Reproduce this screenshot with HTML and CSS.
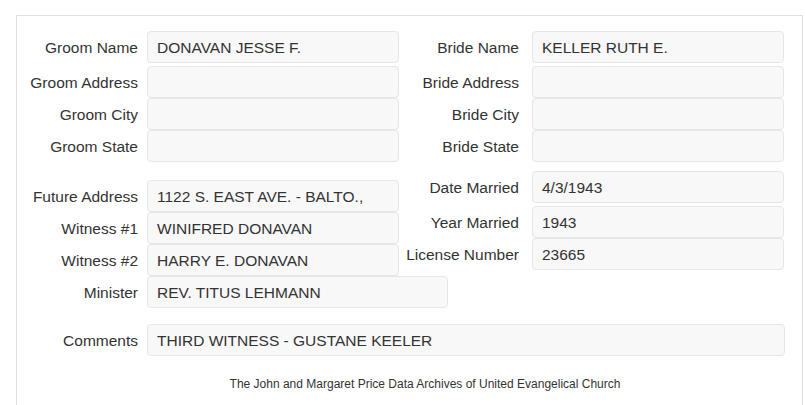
FILE: index.html
```html
<!DOCTYPE html>
<html lang="en">
<head>
    <meta charset="UTF-8">
    <meta name="viewport" content="width=device-width, initial-scale=1.0">
    <title>Marriage Record</title>
    <link rel="stylesheet" href="styles.css">
</head>
<body>
    <div class="panel">
        <div class="section">
            <div class="col col-left">
                <div class="row lead"><label>Groom Name</label><div class="field">DONAVAN JESSE F.</div></div>
                <div class="row"><label>Groom Address</label><div class="field"></div></div>
                <div class="row"><label>Groom City</label><div class="field"></div></div>
                <div class="row"><label>Groom State</label><div class="field"></div></div>
            </div>
            <div class="col col-right">
                <div class="row lead"><label>Bride Name</label><div class="field">KELLER RUTH E.</div></div>
                <div class="row"><label>Bride Address</label><div class="field"></div></div>
                <div class="row"><label>Bride City</label><div class="field"></div></div>
                <div class="row"><label>Bride State</label><div class="field"></div></div>
            </div>
        </div>

        <div class="section second">
            <div class="col col-left shifted">
                <div class="row"><label>Future Address</label><div class="field">1122 S. EAST AVE. - BALTO.,</div></div>
                <div class="row"><label>Witness #1</label><div class="field">WINIFRED DONAVAN</div></div>
                <div class="row"><label>Witness #2</label><div class="field">HARRY E. DONAVAN</div></div>
                <div class="row"><label>Minister</label><div class="field wide">REV. TITUS LEHMANN</div></div>
            </div>
            <div class="col col-right">
                <div class="row lead"><label>Date Married</label><div class="field">4/3/1943</div></div>
                <div class="row"><label>Year Married</label><div class="field">1943</div></div>
                <div class="row"><label>License Number</label><div class="field">23665</div></div>
            </div>
        </div>

        <div class="row comments"><label>Comments</label><div class="field full">THIRD WITNESS - GUSTANE KEELER</div></div>

        <p class="footer">The John and Margaret Price Data Archives of United Evangelical Church</p>
    </div>
</body>
</html>
```

FILE: styles.css
```css
body {
    font-family: "Liberation Sans", Arial, sans-serif;
    font-size: 15.5px;
    color: #333;
    background-color: #fff;
    margin: 0;
    padding: 0;
}
.panel {
    margin: 15px 2px 0 16px;
    border: 1px solid #e0e0e0;
    border-bottom: none;
    padding-top: 15px;
    min-height: 374px;
}
.section {
    display: flex;
    align-items: flex-start;
}
.section.second {
    margin-top: 9px;
}
.col {
    display: flex;
    flex-direction: column;
}
.col-left {
    width: 382px;
}
.col-right {
    width: 385px;
}
.col.shifted {
    margin-top: 9px;
}
.row {
    display: flex;
    align-items: center;
}
.row.lead {
    margin-bottom: 3px;
}
.row label {
    flex-shrink: 0;
    text-align: right;
    white-space: nowrap;
    padding-top: 1px;
}
.col-left label,
.comments label {
    width: 121px;
    padding-right: 9px;
}
.col-right label {
    width: 120px;
    padding-right: 13px;
}
.field {
    flex-shrink: 0;
    box-sizing: border-box;
    width: 252px;
    height: 32px;
    line-height: 31px;
    padding: 0 9px;
    background-color: #f8f8f8;
    border: 1px solid #e6e6e6;
    border-radius: 4px;
    white-space: nowrap;
    overflow: hidden;
}
.field.wide {
    width: 301px;
}
.field.full {
    width: 638px;
}
.comments {
    margin-top: 16px;
}
.footer {
    margin: 18px 0 0;
    padding-left: 31px;
    font-size: 12px;
    line-height: 20px;
    text-align: center;
}
```
